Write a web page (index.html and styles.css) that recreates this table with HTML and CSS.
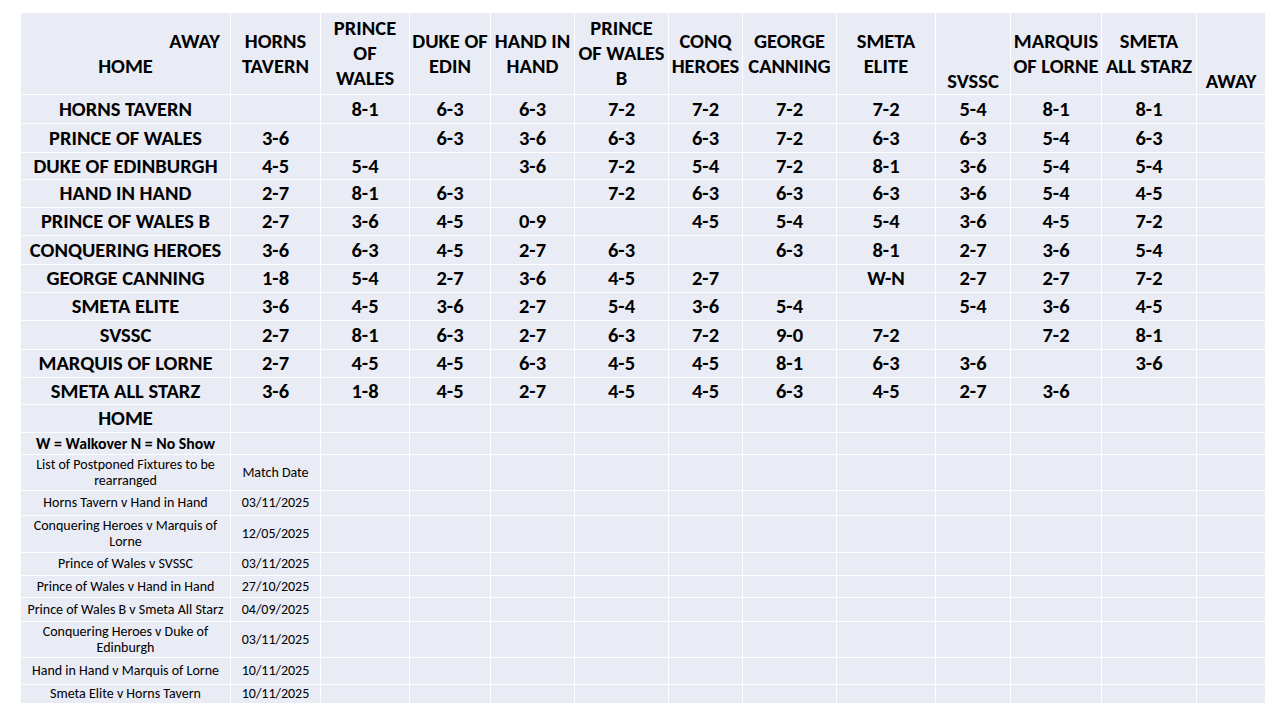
FILE: index.html
```html
<!DOCTYPE html>
<html>
<head>
<meta charset="utf-8">
<link rel="stylesheet" href="styles.css">
</head>
<body>
<table class="league">
<colgroup>
<col class="c-team"><col class="c90"><col class="c89"><col class="c81"><col class="c84"><col class="c94"><col class="c74"><col class="c94"><col class="c99"><col class="c75"><col class="c91"><col class="c95"><col class="c69">
</colgroup>
<tr class="r-head">
<td class="corner"><div class="away-lbl">AWAY</div><div class="home-lbl">HOME</div></td>
<td>HORNS<br>TAVERN</td>
<td>PRINCE<br>OF<br>WALES</td>
<td>DUKE OF<br>EDIN</td>
<td>HAND IN<br>HAND</td>
<td>PRINCE<br>OF WALES<br>B</td>
<td>CONQ<br>HEROES</td>
<td>GEORGE<br>CANNING</td>
<td>SMETA<br>ELITE</td>
<td class="bottom">SVSSC</td>
<td>MARQUIS<br>OF LORNE</td>
<td>SMETA<br>ALL STARZ</td>
<td class="bottom away-end">AWAY</td>
</tr>
<tr class="r-a"><td>HORNS TAVERN</td><td></td><td>8-1</td><td>6-3</td><td>6-3</td><td>7-2</td><td>7-2</td><td>7-2</td><td>7-2</td><td>5-4</td><td>8-1</td><td>8-1</td><td></td></tr>
<tr class="r-a"><td>PRINCE OF WALES</td><td>3-6</td><td></td><td>6-3</td><td>3-6</td><td>6-3</td><td>6-3</td><td>7-2</td><td>6-3</td><td>6-3</td><td>5-4</td><td>6-3</td><td></td></tr>
<tr class="r-b"><td>DUKE OF EDINBURGH</td><td>4-5</td><td>5-4</td><td></td><td>3-6</td><td>7-2</td><td>5-4</td><td>7-2</td><td>8-1</td><td>3-6</td><td>5-4</td><td>5-4</td><td></td></tr>
<tr class="r-c"><td>HAND IN HAND</td><td>2-7</td><td>8-1</td><td>6-3</td><td></td><td>7-2</td><td>6-3</td><td>6-3</td><td>6-3</td><td>3-6</td><td>5-4</td><td>4-5</td><td></td></tr>
<tr class="r-c"><td>PRINCE OF WALES B</td><td>2-7</td><td>3-6</td><td>4-5</td><td>0-9</td><td></td><td>4-5</td><td>5-4</td><td>5-4</td><td>3-6</td><td>4-5</td><td>7-2</td><td></td></tr>
<tr class="r-a"><td>CONQUERING HEROES</td><td>3-6</td><td>6-3</td><td>4-5</td><td>2-7</td><td>6-3</td><td></td><td>6-3</td><td>8-1</td><td>2-7</td><td>3-6</td><td>5-4</td><td></td></tr>
<tr class="r-c"><td>GEORGE CANNING</td><td>1-8</td><td>5-4</td><td>2-7</td><td>3-6</td><td>4-5</td><td>2-7</td><td></td><td>W-N</td><td>2-7</td><td>2-7</td><td>7-2</td><td></td></tr>
<tr class="r-c"><td>SMETA ELITE</td><td>3-6</td><td>4-5</td><td>3-6</td><td>2-7</td><td>5-4</td><td>3-6</td><td>5-4</td><td></td><td>5-4</td><td>3-6</td><td>4-5</td><td></td></tr>
<tr class="r-a"><td>SVSSC</td><td>2-7</td><td>8-1</td><td>6-3</td><td>2-7</td><td>6-3</td><td>7-2</td><td>9-0</td><td>7-2</td><td></td><td>7-2</td><td>8-1</td><td></td></tr>
<tr class="r-c"><td>MARQUIS OF LORNE</td><td>2-7</td><td>4-5</td><td>4-5</td><td>6-3</td><td>4-5</td><td>4-5</td><td>8-1</td><td>6-3</td><td>3-6</td><td></td><td>3-6</td><td></td></tr>
<tr class="r-b"><td>SMETA ALL STARZ</td><td>3-6</td><td>1-8</td><td>4-5</td><td>2-7</td><td>4-5</td><td>4-5</td><td>6-3</td><td>4-5</td><td>2-7</td><td>3-6</td><td></td><td></td></tr>
<tr class="r-home"><td>HOME</td><td></td><td></td><td></td><td></td><td></td><td></td><td></td><td></td><td></td><td></td><td></td><td></td></tr>
<tr class="r-key"><td class="key">W = Walkover N = No Show</td><td></td><td></td><td></td><td></td><td></td><td></td><td></td><td></td><td></td><td></td><td></td><td></td></tr>
<tr class="small h36"><td>List of Postponed Fixtures to be rearranged</td><td>Match Date</td><td></td><td></td><td></td><td></td><td></td><td></td><td></td><td></td><td></td><td></td><td></td></tr>
<tr class="small h25"><td>Horns Tavern v Hand in Hand</td><td>03/11/2025</td><td></td><td></td><td></td><td></td><td></td><td></td><td></td><td></td><td></td><td></td><td></td></tr>
<tr class="small h37"><td>Conquering Heroes v Marquis of Lorne</td><td>12/05/2025</td><td></td><td></td><td></td><td></td><td></td><td></td><td></td><td></td><td></td><td></td><td></td></tr>
<tr class="small h23"><td>Prince of Wales v SVSSC</td><td>03/11/2025</td><td></td><td></td><td></td><td></td><td></td><td></td><td></td><td></td><td></td><td></td><td></td></tr>
<tr class="small h22"><td>Prince of Wales v Hand in Hand</td><td>27/10/2025</td><td></td><td></td><td></td><td></td><td></td><td></td><td></td><td></td><td></td><td></td><td></td></tr>
<tr class="small h24"><td>Prince of Wales B v Smeta All Starz</td><td>04/09/2025</td><td></td><td></td><td></td><td></td><td></td><td></td><td></td><td></td><td></td><td></td><td></td></tr>
<tr class="small h36"><td>Conquering Heroes v Duke of Edinburgh</td><td>03/11/2025</td><td></td><td></td><td></td><td></td><td></td><td></td><td></td><td></td><td></td><td></td><td></td></tr>
<tr class="small h27"><td>Hand in Hand v Marquis of Lorne</td><td>10/11/2025</td><td></td><td></td><td></td><td></td><td></td><td></td><td></td><td></td><td></td><td></td><td></td></tr>
<tr class="small h19"><td>Smeta Elite v Horns Tavern</td><td>10/11/2025</td><td></td><td></td><td></td><td></td><td></td><td></td><td></td><td></td><td></td><td></td><td></td></tr>
</table>
</body>
</html>
```
FILE: styles.css
```css
html, body {
  margin: 0;
  padding: 0;
  background: #ffffff;
}
body {
  padding: 12px 0 0 20px;
  font-family: Carlito, Calibri, Lato, "Liberation Sans", sans-serif;
  color: #000;
}
.league {
  border-collapse: collapse;
  table-layout: fixed;
  width: 1245px;
}
.league td {
  box-sizing: border-box;
  background: #e9ebf5;
  border: 1px solid #ffffff;
  padding: 0 2px;
  text-align: center;
  vertical-align: middle;
  font-weight: bold;
  font-size: 20.5px;
  line-height: 25px;
  white-space: nowrap;
  overflow: hidden;
}
.c-team { width: 210px; }
.c90 { width: 90px; }
.c89 { width: 89px; }
.c81 { width: 81px; }
.c84 { width: 84px; }
.c94 { width: 94px; }
.c74 { width: 74px; }
.c99 { width: 99px; }
.c75 { width: 75px; }
.c91 { width: 91px; }
.c95 { width: 95px; }
.c69 { width: 69px; }

.r-head td { height: 82px; }
.corner .away-lbl { text-align: right; padding-right: 8px; }
.corner .home-lbl { text-align: center; }
.league td.bottom {
  vertical-align: bottom;
  line-height: 25px;
  padding-bottom: 0;
  overflow: visible;
}
.league td.bottom .lift { display: block; }

.r-a td { height: 29px; }
.r-b td { height: 27px; }
.r-c td { height: 28px; }
.r-home td { height: 28px; }
.r-key td { height: 22px; }
.league td.key { font-size: 15.8px; line-height: 18px; }

.small td {
  font-weight: normal;
  font-size: 14px;
  line-height: 16px;
  white-space: normal;
}
.h19 td { height: 19px; }
.h22 td { height: 22px; }
.h23 td { height: 23px; }
.h24 td { height: 24px; }
.h25 td { height: 25px; }
.h27 td { height: 27px; }
.h36 td { height: 36px; }
.h37 td { height: 37px; }
```
